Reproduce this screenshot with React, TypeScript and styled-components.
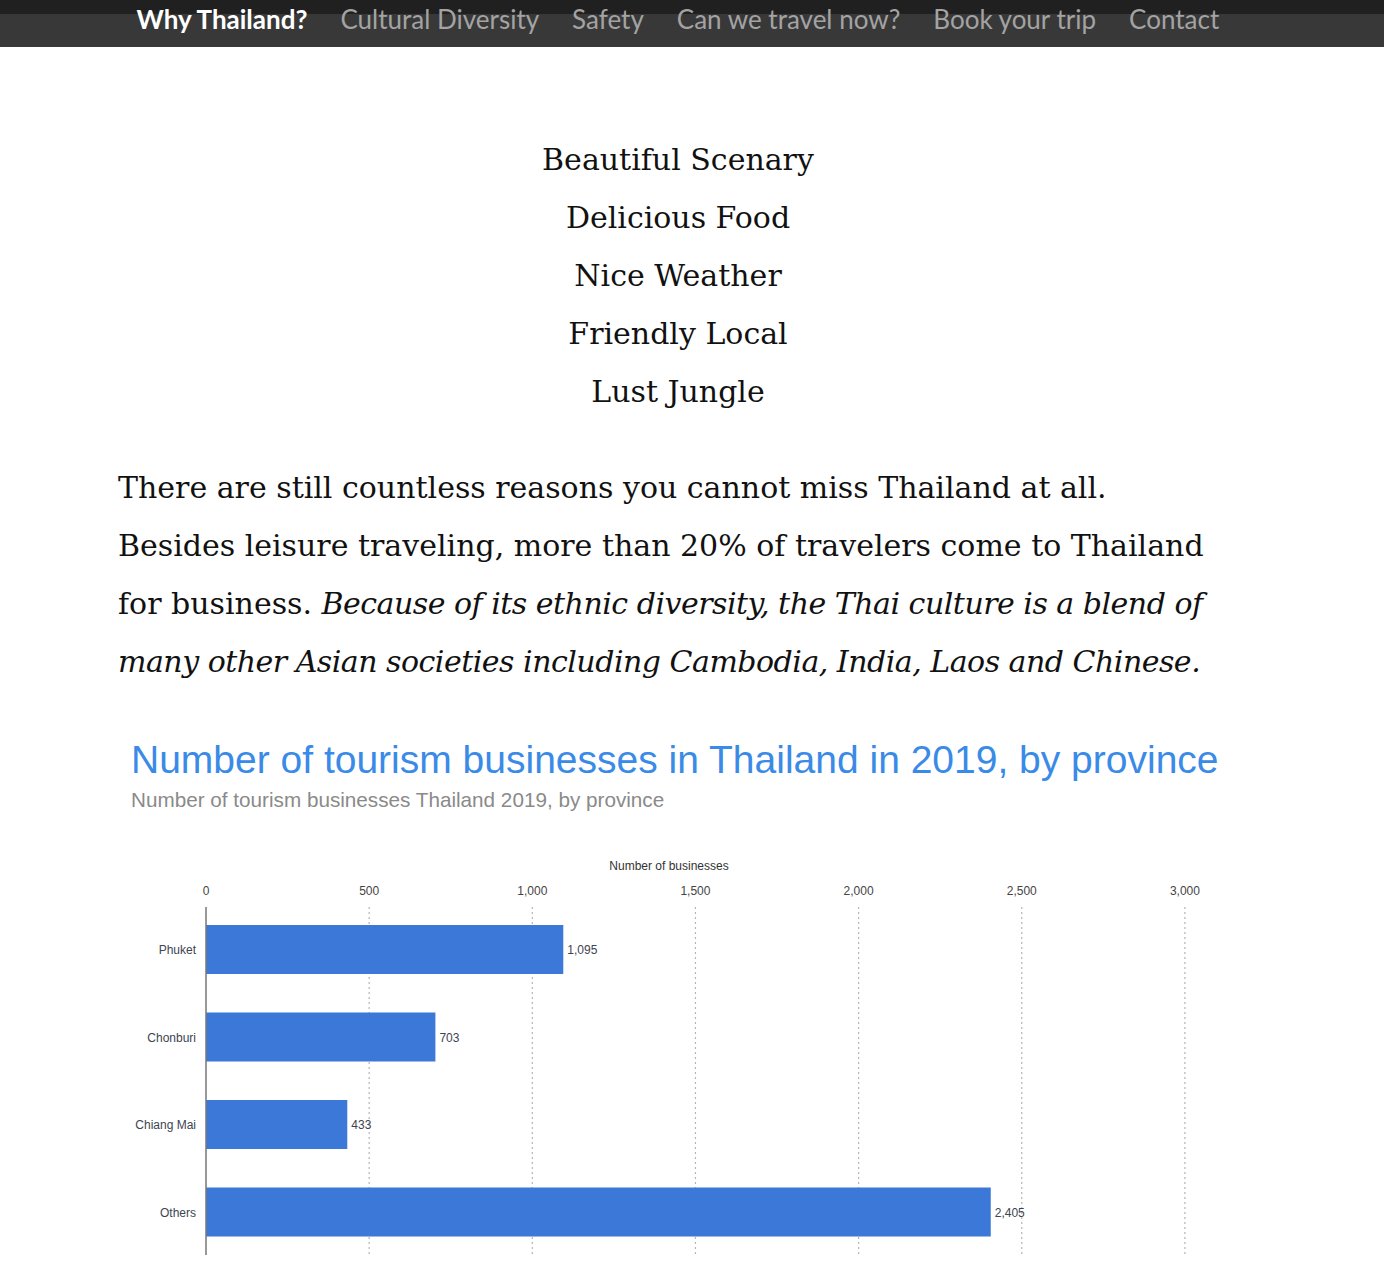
import * as React from "react";
import styled, { createGlobalStyle } from "styled-components";

const GlobalStyle = createGlobalStyle`
  html, body {
    margin: 0;
    padding: 0;
    background: #fff;
  }
  body {
    font-family: "DejaVu Serif", "Liberation Serif", serif;
    color: #111;
  }
`;

const NavBar = styled.nav`
  height: 47px;
  background: linear-gradient(to bottom, #202020 0, #202020 14px, #383838 14px, #383838 100%);
  display: flex;
  align-items: flex-start;
  padding-left: 120px;
  box-sizing: border-box;
`;

const NavLink = styled.a<{ $active?: boolean }>`
  font-family: Lato, "Open Sans", sans-serif;
  font-size: 26px;
  line-height: 38px;
  padding: 0 16.5px;
  font-weight: ${(p) => (p.$active ? 700 : 400)};
  color: ${(p) => (p.$active ? "#ffffff" : "#a3a3a3")};
  text-decoration: none;
  cursor: pointer;
  white-space: nowrap;
`;

const Main = styled.main`
  width: 1120px;
  margin-left: 118px;
`;

const Reasons = styled.ul`
  list-style: none;
  margin: 84px 0 0;
  padding: 0;
  text-align: center;
`;

const Reason = styled.li`
  font-size: 30px;
  line-height: 58px;
`;

const Paragraph = styled.p`
  margin: 38px 0 0;
  max-width: 1100px;
  font-size: 30px;
  line-height: 58px;

  em {
    letter-spacing: -0.5px;
  }
`;

const ChartBlock = styled.section`
  margin-top: 47px;
`;

const ChartTitle = styled.h2`
  margin: 0;
  padding-left: 13px;
  font-family: "Liberation Sans", Arial, sans-serif;
  font-weight: 400;
  font-size: 39px;
  line-height: 44px;
  color: #3a8ae8;
  white-space: nowrap;
`;

const ChartSubtitle = styled.div`
  padding-left: 13px;
  margin-top: 6px;
  font-family: "Liberation Sans", Arial, sans-serif;
  font-size: 20.7px;
  line-height: 24px;
  color: #8a8a8a;
`;

const ChartSvg = styled.svg`
  display: block;
  margin-top: 8px;
  font-family: "Liberation Sans", Arial, sans-serif;
`;

const navItems = [
  "Why Thailand?",
  "Cultural Diversity",
  "Safety",
  "Can we travel now?",
  "Book your trip",
  "Contact",
];

const reasons = [
  "Beautiful Scenary",
  "Delicious Food",
  "Nice Weather",
  "Friendly Local",
  "Lust Jungle",
];

const data = [
  { name: "Phuket", value: 1095 },
  { name: "Chonburi", value: 703 },
  { name: "Chiang Mai", value: 433 },
  { name: "Others", value: 2405 },
];

const ticks = [0, 500, 1000, 1500, 2000, 2500, 3000];

const AXIS_X = 88;
const SCALE = 0.3263;
const TOP = 87;
const BOTTOM = 435;

const BarChart: React.FC = () => (
  <ChartSvg width={1120} height={462} viewBox="0 0 1120 462">
    <text x={551} y={50} fontSize={12} fill="#333" textAnchor="middle">
      Number of businesses
    </text>
    {ticks.map((t) => {
      const x = AXIS_X + t * SCALE;
      return (
        <g key={t}>
          <text x={x} y={75} fontSize={12} fill="#444" textAnchor="middle">
            {t.toLocaleString("en-US")}
          </text>
          {t > 0 && (
            <line
              x1={x}
              x2={x}
              y1={TOP}
              y2={BOTTOM}
              stroke="#b5b5b5"
              strokeWidth={1.2}
              strokeDasharray="2 3"
            />
          )}
        </g>
      );
    })}
    {data.map((d, i) => {
      const y = 105 + i * 87.5;
      const w = d.value * SCALE;
      return (
        <g key={d.name}>
          <text x={AXIS_X - 10} y={y + 29} fontSize={12} fill="#3d4450" textAnchor="end">
            {d.name}
          </text>
          <rect x={AXIS_X} y={y} width={w} height={49} fill="#3b78d8" />
          <text x={AXIS_X + w + 4} y={y + 29} fontSize={12} fill="#3d4450">
            {d.value.toLocaleString("en-US")}
          </text>
        </g>
      );
    })}
    <line x1={AXIS_X} x2={AXIS_X} y1={TOP} y2={BOTTOM} stroke="#777" strokeWidth={1.5} />
  </ChartSvg>
);

const App: React.FC = () => {
  return (
    <>
      <GlobalStyle />
      <NavBar>
        {navItems.map((item, i) => (
          <NavLink key={item} $active={i === 0}>
            {item}
          </NavLink>
        ))}
      </NavBar>
      <Main>
        <Reasons>
          {reasons.map((r) => (
            <Reason key={r}>{r}</Reason>
          ))}
        </Reasons>
        <Paragraph>
          There are still countless reasons you cannot miss Thailand at all. Besides leisure
          traveling, more than 20% of travelers come to Thailand for business.{" "}
          <em>
            Because of its ethnic diversity, the Thai culture is a blend of many other Asian
            societies including Cambodia, India, Laos and Chinese.
          </em>
        </Paragraph>
        <ChartBlock>
          <ChartTitle>Number of tourism businesses in Thailand in 2019, by province</ChartTitle>
          <ChartSubtitle>Number of tourism businesses Thailand 2019, by province</ChartSubtitle>
          <BarChart />
        </ChartBlock>
      </Main>
    </>
  );
};

export default App;
